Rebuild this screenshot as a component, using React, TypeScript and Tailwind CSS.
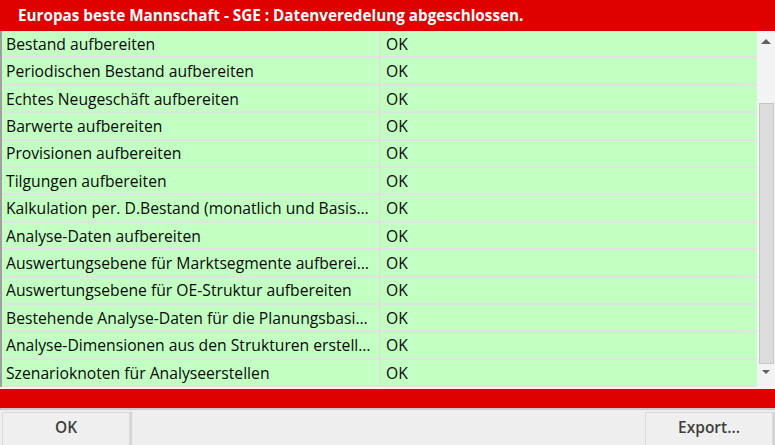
import React from "react";

const rows = [
  "Bestand aufbereiten",
  "Periodischen Bestand aufbereiten",
  "Echtes Neugeschäft aufbereiten",
  "Barwerte aufbereiten",
  "Provisionen aufbereiten",
  "Tilgungen aufbereiten",
  "Kalkulation per. D.Bestand (monatlich und Basisdaten)",
  "Analyse-Daten aufbereiten",
  "Auswertungsebene für Marktsegmente aufbereiten",
  "Auswertungsebene für OE-Struktur aufbereiten",
  "Bestehende Analyse-Daten für die Planungsbasis übernehmen",
  "Analyse-Dimensionen aus den Strukturen erstellen",
  "Szenarioknoten für Analyseerstellen",
];

export default function App() {
  return (
    <div
      className="w-[775px] h-[445px] flex flex-col bg-[#eeeeee] overflow-hidden"
      style={{ fontFamily: '"Open Sans", "Liberation Sans", sans-serif' }}
    >
      <div className="h-[31px] shrink-0 bg-[#e00000] text-white font-bold text-[15.25px] pl-[18px] flex items-center">
        Europas beste Mannschaft - SGE : Datenveredelung abgeschlossen.
      </div>
      <div className="h-[356px] shrink-0 flex bg-white">
        <div className="w-[757px] flex flex-col border-l-2 border-[#a0a0a0]">
          {rows.map((r, i) => (
            <div
              key={i}
              className="h-[27.4px] shrink-0 flex bg-[#c3fec3] border-b-2 border-[#e2e2e2] text-[15.7px] text-[#0a0a0a]"
            >
              <div className="w-[378px] shrink-0 pl-[4px] pr-[8px] pt-[2px] flex items-center border-r border-[#dcdcdc] min-w-0">
                <span className="truncate">{r}</span>
              </div>
              <div className="flex-1 pl-[6px] pt-[2px] flex items-center">OK</div>
            </div>
          ))}
        </div>
        <div className="w-[18px] bg-[#f3f3f3] flex flex-col items-center">
          <svg width="12" height="8" viewBox="0 0 12 8" className="mt-[6px]">
            <path d="M1 7 L6 2 L11 7 Z" fill="#606060" />
          </svg>
          <div className="mt-[58px] w-[15px] h-[261px] bg-[#dcdcdc] border border-[#c6c6c6]" />
          <svg width="10" height="6" viewBox="0 0 10 6" className="mt-[5px]">
            <path d="M1 1 L5 5 L9 1 Z" fill="#606060" />
          </svg>
        </div>
      </div>
      <div className="h-[2px] shrink-0 bg-[#f4f4f4]" />
      <div className="h-[19px] shrink-0 bg-[#e00000]" />
      <div className="h-[2px] shrink-0 bg-[#c8c8ce]" />
      <div className="flex-1 flex justify-between pt-[2px] px-[2px]">
        <div className="w-[128px] h-[40px] bg-[#efefef] border border-[#dadada] shadow-[2px_0_1px_#d4d4d4] flex items-start justify-center pt-[3px] text-[15.5px] font-semibold text-[#404040]">
          OK
        </div>
        <div className="w-[128px] h-[40px] bg-[#efefef] border border-[#dadada] shadow-[2px_0_1px_#d4d4d4] flex items-start justify-center pt-[3px] text-[15.5px] font-semibold text-[#404040]">
          Export...
        </div>
      </div>
    </div>
  );
}
